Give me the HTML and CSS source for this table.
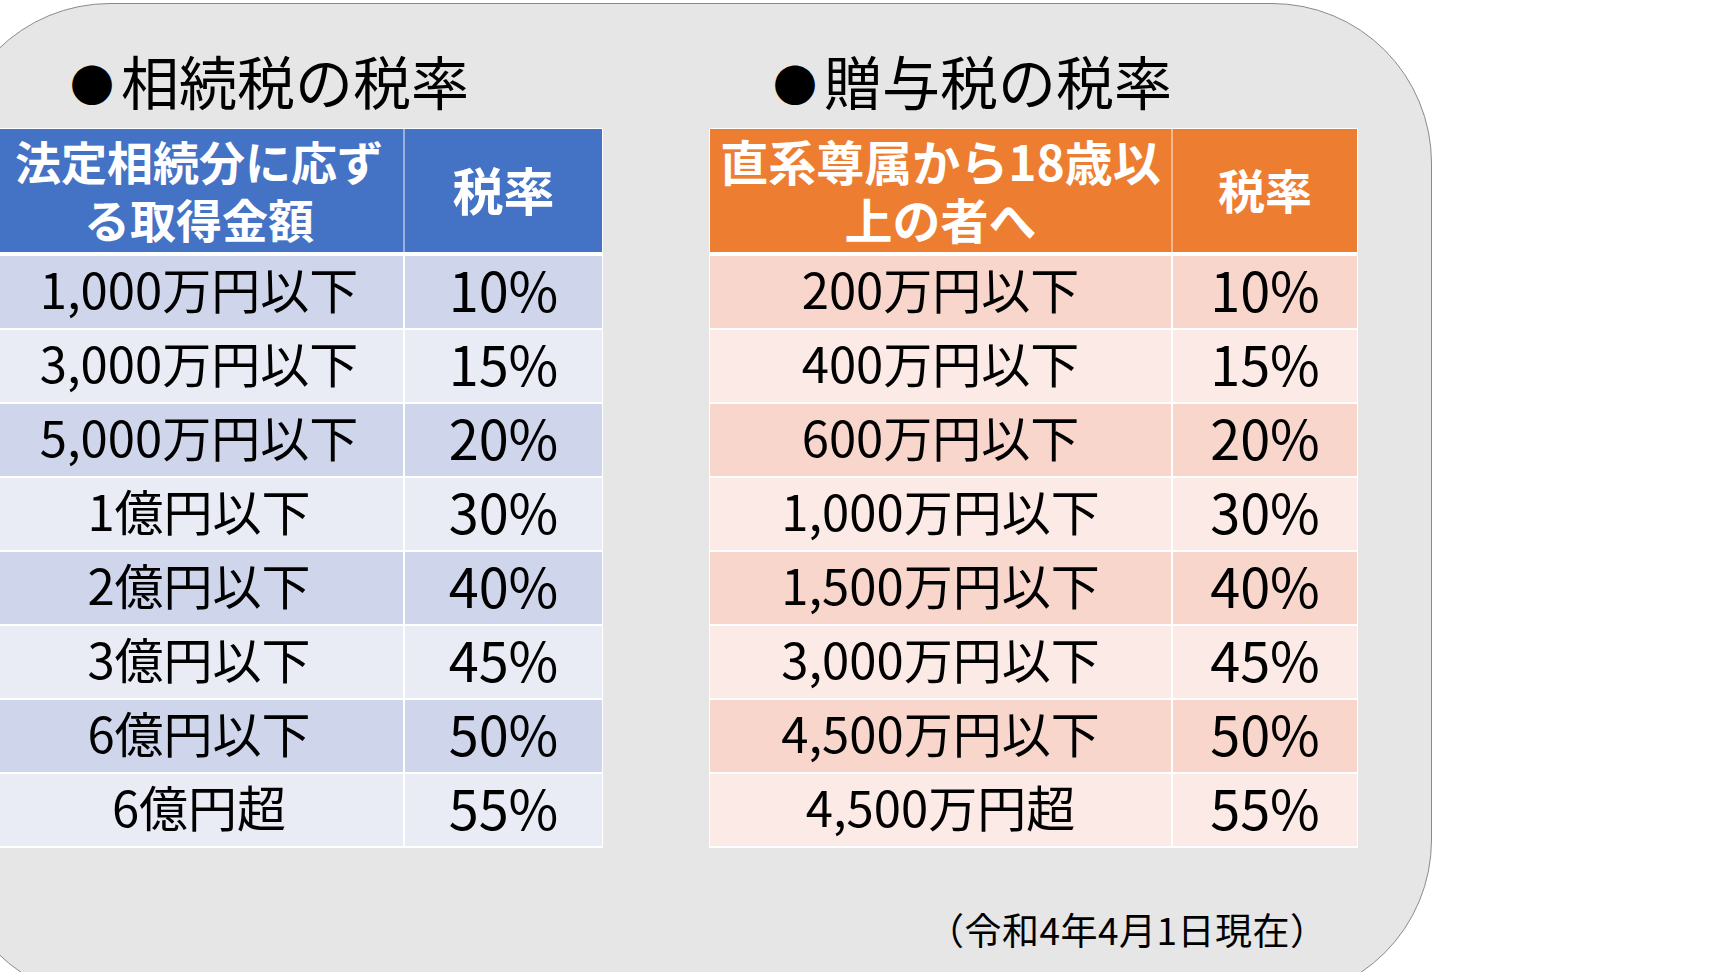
FILE: index.html
```html
<!DOCTYPE html>
<html lang="ja">
<head>
<meta charset="utf-8">
<title>相続税・贈与税の税率</title>
<link rel="stylesheet" href="styles.css">
</head>
<body>
<div class="panel">
  <div class="cols">
    <section class="sec sec-inh">
      <h2 class="title"><span class="bullet">●</span>相続税の税率</h2>
      <div class="rate rate-blue">
        <div class="cell head c1 h-inh">法定相続分に応ず<br>る取得金額</div>
        <div class="cell head c2 h-rate-l">税率</div>
        <div class="cell c1 odd">1,000万円以下</div><div class="cell c2 odd">10%</div>
        <div class="cell c1 even">3,000万円以下</div><div class="cell c2 even">15%</div>
        <div class="cell c1 odd">5,000万円以下</div><div class="cell c2 odd">20%</div>
        <div class="cell c1 even">1億円以下</div><div class="cell c2 even">30%</div>
        <div class="cell c1 odd">2億円以下</div><div class="cell c2 odd">40%</div>
        <div class="cell c1 even">3億円以下</div><div class="cell c2 even">45%</div>
        <div class="cell c1 odd">6億円以下</div><div class="cell c2 odd">50%</div>
        <div class="cell c1 even">6億円超</div><div class="cell c2 even">55%</div>
      </div>
    </section>
    <section class="sec sec-gift">
      <h2 class="title title-gift"><span class="bullet">●</span>贈与税の税率</h2>
      <div class="rate rate-orange">
        <div class="cell head c1 h-gift">直系尊属から18歳以<br>上の者へ</div>
        <div class="cell head c2 h-rate-r">税率</div>
        <div class="cell c1 odd">200万円以下</div><div class="cell c2 odd">10%</div>
        <div class="cell c1 even">400万円以下</div><div class="cell c2 even">15%</div>
        <div class="cell c1 odd">600万円以下</div><div class="cell c2 odd">20%</div>
        <div class="cell c1 even">1,000万円以下</div><div class="cell c2 even">30%</div>
        <div class="cell c1 odd">1,500万円以下</div><div class="cell c2 odd">40%</div>
        <div class="cell c1 even">3,000万円以下</div><div class="cell c2 even">45%</div>
        <div class="cell c1 odd">4,500万円以下</div><div class="cell c2 odd">50%</div>
        <div class="cell c1 even">4,500万円超</div><div class="cell c2 even">55%</div>
      </div>
      <p class="note">（令和4年4月1日現在）</p>
    </section>
  </div>
</div>
</body>
</html>
```

FILE: styles.css
```css
html, body {
  margin: 0;
  padding: 0;
  background: #ffffff;
  width: 1728px;
  height: 972px;
  overflow: hidden;
  font-family: "Noto Sans CJK JP", "Noto Sans", sans-serif;
  color: #000000;
}

.panel {
  box-sizing: border-box;
  width: 1482px;
  height: 997px;
  margin: 3px 0 0 -50px;
  padding: 41px 0 0 44px;
  background: #e6e6e6;
  border: 1px solid #8a8a8a;
  border-radius: 160px;
}

.cols {
  display: flex;
  gap: 106px;
  align-items: flex-start;
}

.sec-inh { width: 608px; }
.sec-gift { width: 649px; }

.title {
  margin: 0 0 13px 0;
  padding-left: 68px;
  font-size: 58px;
  line-height: 70px;
  font-weight: 400;
  white-space: nowrap;
}

.title-gift { padding-left: 57px; }

.bullet {
  display: inline-block;
  width: 58px;
  font-size: 44px;
  text-align: center;
  vertical-align: 3px;
  line-height: 1;
}

.rate {
  display: grid;
  row-gap: 2px;
  background: #ffffff;
  padding: 1px 1px 2px 0;
}

.rate-blue { grid-template-columns: 410px 197px; }
.rate-orange { grid-template-columns: 463px 184px; padding-left: 1px; }

.cell {
  box-sizing: border-box;
  height: 72px;
  display: flex;
  align-items: center;
  justify-content: center;
  text-align: center;
  white-space: nowrap;
  line-height: 1;
}

.c1 {
  border-right: 2px solid #ffffff;
  font-size: 49px;
  padding-bottom: 9px;
}

.c2 {
  font-size: 54px;
  padding-bottom: 6px;
}

.head {
  height: 123px;
  margin-bottom: 2px;
  color: #ffffff;
  font-weight: 700;
  line-height: 58px;
  padding-bottom: 3px;
}

.head.c1 { border-right: 2px solid rgba(255, 255, 255, 0.45); }

.h-inh { font-size: 46px; }
.h-gift { font-size: 48px; }
.h-rate-l { font-size: 51px; padding-bottom: 4px; }
.h-rate-r { font-size: 47px; padding-bottom: 4px; }

.rate-blue .head { background: #4472c4; }
.rate-blue .odd { background: #cfd5ea; }
.rate-blue .even { background: #e9ebf5; }

.rate-orange .head { background: #ed7d31; }
.rate-orange .odd { background: #f8d6cc; }
.rate-orange .even { background: #fbeae6; }

.note {
  margin: 60px 0 0 0;
  padding-left: 218px;
  font-size: 37px;
  letter-spacing: 0.5px;
  line-height: 42px;
  white-space: nowrap;
}
```
